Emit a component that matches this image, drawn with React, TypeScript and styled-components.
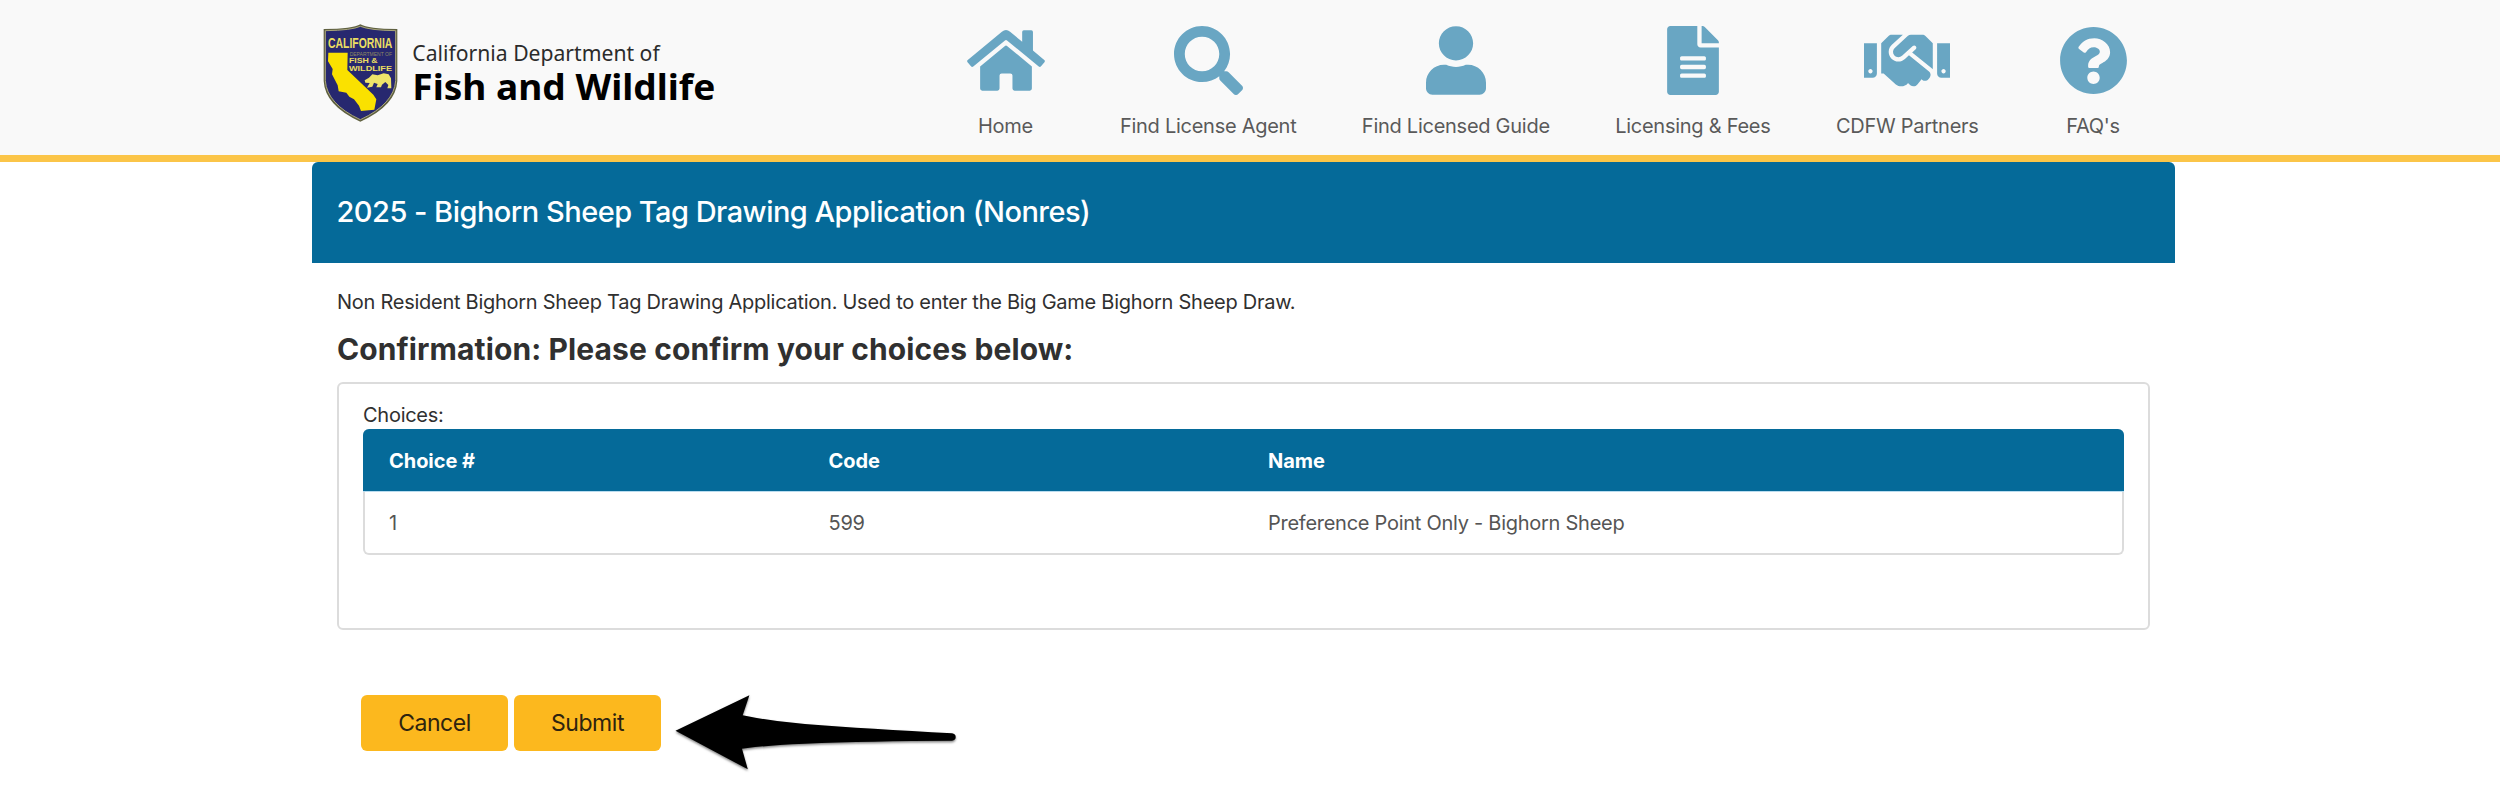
import React from "react";
import styled, { createGlobalStyle } from "styled-components";
import {
  FaFileAlt,
  FaHandshake,
  FaHome,
  FaQuestionCircle,
  FaSearch,
  FaUser,
} from "react-icons/fa";
import type { IconType } from "react-icons";

const blue = "#056a99";
const line = "#dcdcdc";

const GlobalStyle = createGlobalStyle`
  *, *::before, *::after { box-sizing: border-box; }
  body {
    margin: 0;
    background: #fff;
    color: #303030;
    font-family: Inter, "Liberation Sans", sans-serif;
    font-size: 20px;
    line-height: 30px;
    letter-spacing: -0.265px;
  }
`;

const Container = styled.div`
  width: 1863px;
  margin-left: 312px;
`;

const SiteHeader = styled.header`
  height: 162px;
  background: #f9f9f9;
  border-bottom: 7px solid #fbc548;
`;

const HeaderRow = styled(Container)`
  display: flex;
  justify-content: space-between;
  align-items: flex-start;
  padding: 20px 33px 0 6px;
`;

const LogoArt = styled.svg`
  display: block;
  width: 402px;
  height: 106px;
  letter-spacing: 0;
`;

const Nav = styled.nav`
  display: flex;
  gap: 65.4px;
  padding-top: 6px;
`;

const NavItem = styled.a<{ $iconWidth: number }>`
  display: flex;
  flex-direction: column;
  align-items: center;
  min-width: 98px;
  gap: 16px;
  color: #5a5a5a;
  text-decoration: none;
  white-space: nowrap;

  svg {
    display: block;
    height: 69px;
    width: ${(p) => p.$iconWidth}px;
    color: #69a6c3;
  }
`;

const TitleBar = styled.div`
  display: flex;
  align-items: center;
  height: 101px;
  padding: 0 24.5px 2px;
  background: ${blue};
  border-radius: 6px 6px 0 0;
`;

const Title = styled.h1`
  margin: 0;
  color: #fff;
  font-size: 29px;
  font-weight: 500;
  line-height: 36px;
  letter-spacing: -0.52px;
`;

const Content = styled.main`
  padding: 24px 25px 0;
`;

const Intro = styled.p`
  margin: 0;
`;

const Heading = styled.h2`
  margin: 12px 0 13px;
  font-size: 30px;
  font-weight: 700;
  line-height: 40px;
  letter-spacing: 0.1px;
`;

const Panel = styled.section`
  height: 248px;
  padding: 16px 24px 0;
  border: 2px solid ${line};
  border-radius: 6px;
`;

const PanelLabel = styled.div`
  height: 29px;
`;

const Table = styled.div`
  border: 2px solid ${line};
  border-top: 0;
  border-radius: 6px;
`;

const TableRow = styled.div<{ $head?: boolean }>`
  display: grid;
  grid-template-columns: 439.5px 439.5px 1fr;
  align-items: center;
  height: ${(p) => (p.$head ? 63 : 61)}px;
  padding: ${(p) => (p.$head ? "2px 26px 0" : "1px 24px 0")};
  color: ${(p) => (p.$head ? "#fff" : "#555")};
  ${(p) =>
    p.$head &&
    `
    margin: 0 -2px;
    background: ${blue};
    border-bottom: 1px solid #b9dcef;
    border-radius: 6px 6px 0 0;
    font-weight: 700;
    letter-spacing: -0.05px;
  `}
`;

const Actions = styled.div`
  display: flex;
  align-items: flex-start;
  gap: 6px;
  margin: 65px 0 0 24px;
`;

const Button = styled.button`
  width: 147px;
  height: 56px;
  padding: 0 0 1px;
  border: 0;
  border-radius: 6px;
  background: #fcb81e;
  color: #2e230f;
  font-family: inherit;
  font-size: 23px;
  letter-spacing: -0.45px;
`;

const Arrow = styled.svg`
  flex: none;
  width: 290px;
  height: 84px;
  margin-left: 3px;
  overflow: visible;
`;

const Logo = () => (
  <LogoArt viewBox="24 30 1206 318" role="img">
    <path d="M151 43Q174 57 262 57V213Q258 287 151 335Q45 287 41 213V57Q129 57 151 43Z" fill="#5f6040" />
    <path d="M151 49Q180 61 257 62V212Q252 282 151 329Q51 282 46 212V62Q125 61 151 49Z" fill="#27286f" stroke="#aaa77b" strokeWidth="3" />
    <path d="M55 128H113L112 180L190 254L199 268L193 299L153 303L147 287L132 268L118 260L109 248L86 244L83 226L66 193L68 177L54 154Z" fill="#fae100" />
    <path d="M164 211L177 203L187 193L203 196L221 190L236 193L243 205L244 235H232L235 225L226 216L216 224L213 232H199L203 222L192 218L187 230L171 233L179 219L166 218Z" fill="#eee36a" />
    <g fontFamily="Liberation Sans, sans-serif" fill="#ebdf62">
      <text x="54" y="115" fontSize="44" fontWeight="700" textLength="193" lengthAdjust="spacingAndGlyphs">CALIFORNIA</text>
      <text x="119" y="138" fontSize="16" textLength="127" lengthAdjust="spacingAndGlyphs" fill="#8f8a64">DEPARTMENT OF</text>
      <text x="117" y="160" fontSize="23" fontWeight="700" textLength="86" lengthAdjust="spacingAndGlyphs">FISH &amp;</text>
      <text x="117" y="182" fontSize="23" fontWeight="700" textLength="129" lengthAdjust="spacingAndGlyphs">WILDLIFE</text>
    </g>
    <g fontFamily="Noto Sans, sans-serif">
      <text x="307" y="153" fontSize="65" fill="#2b2b2b" textLength="742" lengthAdjust="spacingAndGlyphs">California Department of</text>
      <text x="307" y="270" fontSize="109" fontWeight="700" fill="#000" textLength="909" lengthAdjust="spacingAndGlyphs">Fish and Wildlife</text>
    </g>
  </LogoArt>
);

const navItems: { label: string; Icon: IconType; width: number }[] = [
  { label: "Home", Icon: FaHome, width: 78 },
  { label: "Find License Agent", Icon: FaSearch, width: 69 },
  { label: "Find Licensed Guide", Icon: FaUser, width: 60 },
  { label: "Licensing & Fees", Icon: FaFileAlt, width: 52 },
  { label: "CDFW Partners", Icon: FaHandshake, width: 86 },
  { label: "FAQ's", Icon: FaQuestionCircle, width: 69 },
];

const choices = [
  { number: 1, code: "599", name: "Preference Point Only - Bighorn Sheep" },
];

export default function App() {
  return (
    <>
      <GlobalStyle />
      <SiteHeader>
        <HeaderRow>
          <Logo />
          <Nav>
            {navItems.map(({ label, Icon, width }) => (
              <NavItem key={label} $iconWidth={width}>
                <Icon />
                {label}
              </NavItem>
            ))}
          </Nav>
        </HeaderRow>
      </SiteHeader>
      <Container>
        <TitleBar>
          <Title>2025 - Bighorn Sheep Tag Drawing Application (Nonres)</Title>
        </TitleBar>
        <Content>
          <Intro>
            Non Resident Bighorn Sheep Tag Drawing Application. Used to enter the Big Game Bighorn Sheep Draw.
          </Intro>
          <Heading>Confirmation: Please confirm your choices below:</Heading>
          <Panel>
            <PanelLabel>Choices:</PanelLabel>
            <Table>
              <TableRow $head>
                <span>Choice #</span>
                <span>Code</span>
                <span>Name</span>
              </TableRow>
              {choices.map((c) => (
                <TableRow key={c.number}>
                  <span>{c.number}</span>
                  <span>{c.code}</span>
                  <span>{c.name}</span>
                </TableRow>
              ))}
            </Table>
          </Panel>
          <Actions>
            <Button>Cancel</Button>
            <Button>Submit</Button>
            <Arrow viewBox="670 695 290 84">
              <defs>
                <filter id="arrowShadow" x="-5%" y="-10%" width="110%" height="130%">
                  <feDropShadow dx="0" dy="1.5" stdDeviation="1.2" floodOpacity="0.5" />
                </filter>
              </defs>
              <path
                filter="url(#arrowShadow)"
                d="M675.5 730.7L749.4 695.3L742.7 715.3Q772 721.5 805 724Q870 729 952 733.3Q955.7 734 955.7 737Q955.7 740.4 952 740.7Q870 741 805 743.7Q770 745 742 748.7L747.8 769.3Z"
              />
            </Arrow>
          </Actions>
        </Content>
      </Container>
    </>
  );
}
